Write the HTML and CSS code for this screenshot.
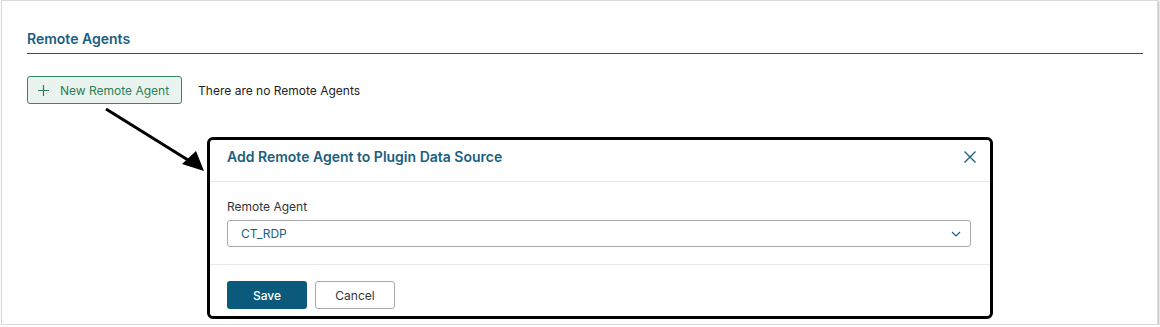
FILE: index.html
```html
<!doctype html>
<html lang="en">
    <head>
        <meta charset="UTF-8" />
        <title>Remote Agents</title>
        <link rel="stylesheet" href="styles.css">
    </head>
    <body>
        <div class="frame">
            <div class="section">
                <h2 class="section-title">Remote Agents</h2>
                <div class="toolbar">
                    <button class="btn-new">
                        <svg class="plus" width="11" height="11" viewBox="0 0 11 11">
                            <path d="M5.5 0V11M0 5.5H11" stroke="#2a7f56" stroke-width="1.2" fill="none" />
                        </svg>
                        New Remote Agent
                    </button>
                    <span class="empty">There are no Remote Agents</span>
                </div>
            </div>

            <!-- callout arrow -->
            <svg class="arrow" width="120" height="80" viewBox="0 0 120 80">
                <line x1="10" y1="9" x2="92" y2="60" stroke="#000" stroke-width="3" />
                <polygon points="108,71 86,64 100,51" fill="#000" />
            </svg>

            <div class="modal">
                <div class="modal-header">
                    <span class="modal-title">Add Remote Agent to Plugin Data Source</span>
                    <svg class="close" width="12" height="12" viewBox="0 0 12 12">
                        <path d="M0.5 0.5L11.5 11.5M11.5 0.5L0.5 11.5" stroke="#1b5e7f" stroke-width="1.3" fill="none" />
                    </svg>
                </div>
                <div class="modal-body">
                    <label class="field-label">Remote Agent</label>
                    <div class="select">
                        <span>CT_RDP</span>
                        <svg width="10" height="6" viewBox="0 0 10 6">
                            <path d="M1 1L5 5L9 1" stroke="#1b5e7f" stroke-width="1.2" fill="none" />
                        </svg>
                    </div>
                </div>
                <div class="modal-footer">
                    <button class="btn-save">Save</button>
                    <button class="btn-cancel">Cancel</button>
                </div>
            </div>
        </div>
    </body>
</html>
```

FILE: styles.css
```css
body {
    margin: 0;
    background-color: #ffffff;
    font-family: "Inter", "Liberation Sans", Arial, sans-serif;
    color: #222222;
}

.frame {
    position: relative;
    box-sizing: border-box;
    height: 325px;
    margin: 0 2px 0 1px;
    border: 1px solid #dadada;
    box-shadow: 1px 1px 2px rgba(0, 0, 0, 0.3);
    padding: 28px 14px 0 25px;
}

.section-title {
    margin: 0;
    font-size: 14px;
    line-height: 20px;
    font-weight: 600;
    color: #1b5e7f;
    padding-bottom: 4px;
    border-bottom: 1.5px solid #1d5877;
}

.toolbar {
    display: flex;
    align-items: center;
    gap: 16px;
    margin-top: 22px;
}

.btn-new {
    display: flex;
    align-items: center;
    gap: 11px;
    height: 28px;
    padding: 0 12px 0 10px;
    border: 1px solid #2e8a58;
    border-radius: 3px;
    background-color: #eaf3ef;
    color: #2a7f56;
    font-family: inherit;
    font-size: 12px;
}

.empty {
    font-size: 12px;
    color: #222222;
}

.arrow {
    position: absolute;
    left: 94px;
    top: 99px;
}

.modal {
    position: absolute;
    left: 205px;
    top: 136px;
    width: 786px;
    height: 182px;
    box-sizing: border-box;
    border: 3px solid #000000;
    border-radius: 6px;
    background-color: #ffffff;
    display: flex;
    flex-direction: column;
}

.modal-header {
    display: flex;
    align-items: center;
    justify-content: space-between;
    box-sizing: border-box;
    height: 42px;
    padding: 0 14px 8px 17px;
    border-bottom: 1px solid #e6e6e6;
}

.modal-title {
    font-size: 14px;
    font-weight: 600;
    color: #1b5e7f;
}

.modal-body {
    padding: 17px 19px 17px 17px;
    border-bottom: 1px solid #e6e6e6;
}

.field-label {
    display: block;
    font-size: 12px;
    line-height: 16px;
    color: #333333;
    margin-bottom: 5px;
}

.select {
    display: flex;
    align-items: center;
    justify-content: space-between;
    box-sizing: border-box;
    height: 27px;
    padding: 0 9px 0 13px;
    border: 1px solid #a9a9a9;
    border-radius: 3px;
    font-size: 12px;
    color: #1b5e7f;
}

.modal-footer {
    display: flex;
    gap: 8px;
    padding: 16px 17px 0;
}

.btn-save,
.btn-cancel {
    width: 80px;
    height: 28px;
    border-radius: 3px;
    font-family: inherit;
    font-size: 12px;
}

.btn-save {
    border: none;
    background-color: #0b5a7b;
    color: #ffffff;
    font-weight: 500;
}

.btn-cancel {
    border: 1px solid #a9a9a9;
    background-color: #ffffff;
    color: #333333;
}
```
